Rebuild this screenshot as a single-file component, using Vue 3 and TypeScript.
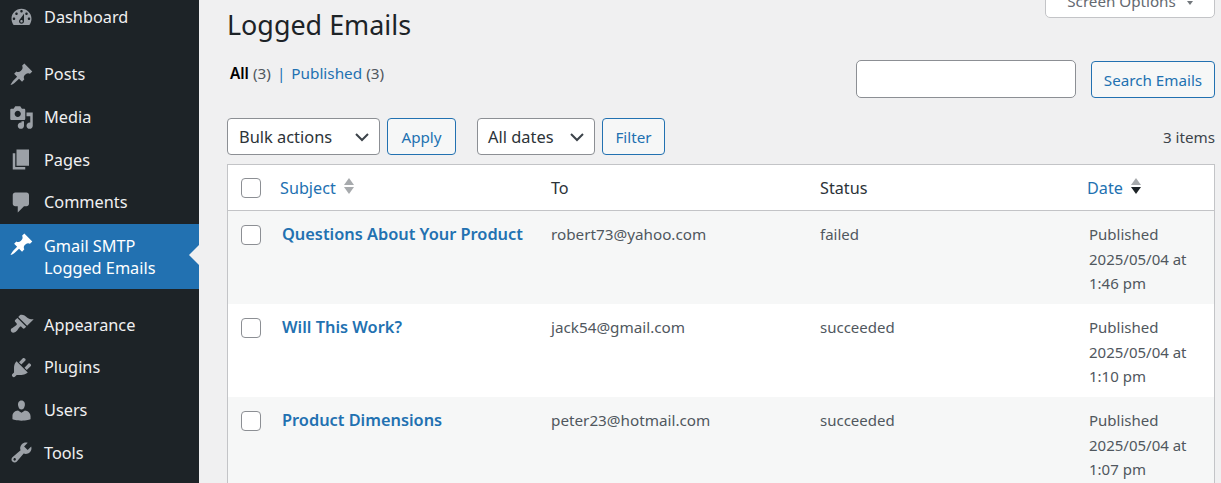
<script setup lang="ts">
interface Menu { label: string[]; path: string; active?: boolean; gapBefore?: boolean }
const menu: Menu[] = [
  { label: ['Dashboard'], path: 'M3.76 16h12.48c1.1-1.37 1.76-3.11 1.76-5 0-4.42-3.58-8-8-8s-8 3.58-8 8c0 1.89.66 3.63 1.76 5zM10 4c.55 0 1 .45 1 1s-.45 1-1 1-1-.45-1-1 .45-1 1-1zM6 6c.55 0 1 .45 1 1s-.45 1-1 1-1-.45-1-1 .45-1 1-1zm8 0c.55 0 1 .45 1 1s-.45 1-1 1-1-.45-1-1 .45-1 1-1zm-5.37 5.55L12 7v6c0 1.1-.9 2-2 2s-2-.9-2-2c0-.57.24-1.08.63-1.45zM4 10c.55 0 1 .45 1 1s-.45 1-1 1-1-.45-1-1 .45-1 1-1zm12 0c.55 0 1 .45 1 1s-.45 1-1 1-1-.45-1-1 .45-1 1-1zm-5 3c0-.55-.45-1-1-1s-1 .45-1 1 .45 1 1 1 1-.45 1-1z' },
  { label: ['Posts'], gapBefore: true, path: 'M10.44 3.02l1.82-1.82 6.36 6.35-1.83 1.82c-1.05-.68-2.48-.57-3.41.36l-.75.75c-.92.93-1.04 2.35-.35 3.41l-1.83 1.82-2.41-2.41-2.8 2.79c-.42.42-3.38 2.71-3.8 2.29s1.86-3.39 2.28-3.81l2.79-2.79L4.1 9.36l1.83-1.82c1.05.69 2.48.57 3.41-.36l.75-.75c.93-.92 1.05-2.35.35-3.41z' },
  { label: ['Media'], path: 'M13 11V4c0-.55-.45-1-1-1h-1.67L9 1H5L3.67 3H2c-.55 0-1 .45-1 1v7c0 .55.45 1 1 1h10c.55 0 1-.45 1-1zM7 4.5c1.38 0 2.5 1.12 2.5 2.5S8.38 9.5 7 9.5 4.5 8.38 4.5 7 5.62 4.5 7 4.5zM14 6h5v10.5c0 1.38-1.12 2.5-2.5 2.5S14 17.88 14 16.5s1.12-2.5 2.5-2.5c.17 0 .34.02.5.05V9h-3V6zm-4 8.05V13h2v3.5c0 1.38-1.12 2.5-2.5 2.5S7 17.88 7 16.5 8.12 14 9.5 14c.17 0 .34.02.5.05z' },
  { label: ['Pages'], path: 'M6 15V2h10v13H6zm-1 1h8v2H3V5h2v11z' },
  { label: ['Comments'], path: 'M5 2h9c1.1 0 2 .9 2 2v7c0 1.1-.9 2-2 2h-2l-5 5v-5H5c-1.1 0-2-.9-2-2V4c0-1.1.9-2 2-2z' },
  { label: ['Gmail SMTP', 'Logged Emails'], active: true, path: 'M10.44 3.02l1.82-1.82 6.36 6.35-1.83 1.82c-1.05-.68-2.48-.57-3.41.36l-.75.75c-.92.93-1.04 2.35-.35 3.41l-1.83 1.82-2.41-2.41-2.8 2.79c-.42.42-3.38 2.71-3.8 2.29s1.86-3.39 2.28-3.81l2.79-2.79L4.1 9.36l1.83-1.82c1.05.69 2.48.57 3.41-.36l.75-.75c.93-.92 1.05-2.35.35-3.41z' },
  { label: ['Appearance'], gapBefore: true, path: 'M14.48 11.06L7.41 3.99l1.5-1.5c.5-.56 2.3-.47 3.51.32 1.21.8 1.43 1.28 2.91 2.1 1.18.64 2.45 1.26 4.45.85zm-.71.71L6.7 4.7 4.93 6.47c-.39.39-.39 1.02 0 1.41l1.06 1.06c.39.39.39 1.03 0 1.42-.6.6-1.43 1.11-2.21 1.69-.35.26-.7.53-1.01.84C1.43 13.23.91 14.9 1.98 15.97c1.07 1.07 2.74.55 4.08-.79.31-.31.58-.66.84-1.01.58-.78 1.09-1.61 1.69-2.21.39-.39 1.03-.39 1.42 0l1.06 1.06c.39.39 1.02.39 1.41 0z' },
  { label: ['Plugins'], path: 'M13.11 4.36L9.87 7.6 8 5.73l3.24-3.24c.35-.34 1.05-.2 1.56.32.52.51.66 1.21.31 1.55zm-8 1.77l.91-1.12 9.01 9.01-1.19.84c-.71.71-2.63 1.16-3.82 1.16H6.14L4.9 17.26c-.59.59-1.54.59-2.12 0-.59-.58-.59-1.53 0-2.12l1.24-1.24v-3.88c0-1.13.4-3.19 1.09-3.89zm7.26 3.97l3.24-3.24c.34-.35 1.04-.21 1.55.31.52.51.66 1.21.31 1.55l-3.24 3.25z' },
  { label: ['Users'], path: 'M10 9.25c-2.27 0-2.73-3.44-2.73-3.44C7 4.02 7.82 2 9.97 2c2.16 0 2.98 2.02 2.71 3.81 0 0-.41 3.44-2.68 3.44zm0 2.57L12.72 10c2.39 0 4.52 2.33 4.52 4.53v2.49s-3.65 1.13-7.24 1.13c-3.65 0-7.24-1.13-7.24-1.13v-2.49c0-2.25 1.94-4.48 4.47-4.48z' },
  { label: ['Tools'], path: 'M16.68 9.77c-1.34 1.34-3.3 1.67-4.95.99l-5.41 6.52c-.99.99-2.59.99-3.58 0s-.99-2.59 0-3.57l6.52-5.42c-.68-1.65-.35-3.61.99-4.95 1.28-1.28 3.12-1.62 4.72-1.06l-2.89 2.89 2.82 2.82 2.86-2.87c.53 1.58.18 3.39-1.08 4.65zM3.81 16.21c.4.39 1.04.39 1.43 0 .4-.4.4-1.04 0-1.43-.39-.4-1.03-.4-1.43 0-.39.39-.39 1.03 0 1.43z' },
]
const rows = [
  { subject: 'Questions About Your Product', to: 'robert73@yahoo.com', status: 'failed', time: '1:46 pm' },
  { subject: 'Will This Work?', to: 'jack54@gmail.com', status: 'succeeded', time: '1:10 pm' },
  { subject: 'Product Dimensions', to: 'peter23@hotmail.com', status: 'succeeded', time: '1:07 pm' },
]
</script>

<template>
  <div class="page">
    <nav class="side">
      <a v-for="m in menu" :key="m.label[0]" class="item" :class="{ active: m.active, gap: m.gapBefore }">
        <svg class="ico" viewBox="0 0 20 20"><path :d="m.path" /></svg>
        <span class="lbl"><span v-for="l in m.label" :key="l" class="ln">{{ l }}</span></span>
      </a>
    </nav>
    <main class="main">
      <header class="head">
        <h1>Logged Emails</h1>
        <div class="screen">Screen Options <i class="caret"></i></div>
      </header>
      <div class="bar-top">
        <div class="subsub"><b>All</b> <span class="cnt">(3)</span><span class="sep">|</span><a>Published</a> <span class="cnt">(3)</span></div>
        <div class="search"><div class="input"></div><button class="btn search-btn">Search Emails</button></div>
      </div>
      <div class="nav">
        <div class="select bulk">Bulk actions<svg viewBox="0 0 16 16"><path d="M2 5l6 6 6-6" /></svg></div>
        <button class="btn apply">Apply</button>
        <div class="select dates">All dates<svg viewBox="0 0 16 16"><path d="M2 5l6 6 6-6" /></svg></div>
        <button class="btn filter">Filter</button>
        <span class="count">3 items</span>
      </div>
      <section class="table">
        <div class="row th">
          <span class="cb-cell"><span class="cb"></span></span>
          <span class="sub-h"><a>Subject</a><span class="sort"><i class="up"></i><i class="down"></i></span></span>
          <span>To</span>
          <span>Status</span>
          <span class="date-h"><a>Date</a><span class="sort"><i class="up"></i><i class="down dark"></i></span></span>
        </div>
        <div v-for="(r, i) in rows" :key="r.subject" class="row td" :class="{ alt: i % 2 === 0 }">
          <span class="cb-cell"><span class="cb"></span></span>
          <a class="subject">{{ r.subject }}</a>
          <span class="email">{{ r.to }}</span>
          <span>{{ r.status }}</span>
          <span class="date">Published<br />2025/05/04 at<br />{{ r.time }}</span>
        </div>
      </section>
    </main>
  </div>
</template>

<style>
html, body { margin: 0; overflow: hidden; }
</style>

<style scoped>
.page {
  display: flex; width: 1221px; height: 483px; overflow: hidden;
  background: #f0f0f1; font-family: "Noto Sans", "Open Sans", sans-serif;
  color: #3c434a; font-size: 15px;
}
.side {
  width: 199px; flex: none; background: #1d2327; color: #f0f0f1;
  display: flex; flex-direction: column;
}
.item {
  position: relative; display: flex; align-items: center; height: 42.7px; flex: none;
  padding-left: 9px; box-sizing: border-box;
}
.item:first-child { margin-top: -4px; }
.item.gap { margin-top: 14.3px; }
.item.active + .item.gap { margin-top: 14.6px; }
.item.active {
  height: 65px; background: #2271b1; color: #fff; align-items: flex-start; padding-top: 11.5px;
}
.item.active::after {
  content: ""; position: absolute; right: 0; top: 21px;
  border: 10px solid transparent; border-right-color: #f0f0f1; border-left: 0;
}
.ico { width: 25px; height: 25px; flex: none; fill: #9ca1a7; }
.active .ico { fill: #fff; margin-top: -3px; }
.lbl { margin-left: 10px; display: flex; flex-direction: column; font-size: 16.3px; line-height: 22px; }
.ln { white-space: nowrap; }
.main { flex: 1; min-width: 0; padding: 0 6px 0 28px; }
.head { display: flex; justify-content: space-between; align-items: flex-start; height: 60px; }
h1 {
  margin: 6px 0 0; font-size: 26.9px; line-height: 38px; font-weight: 400; color: #1d2327;
}
.screen {
  margin-top: -14px; height: 32px; width: 170px; box-sizing: border-box;
  background: #fff; border: 1px solid #c3c4c7; border-radius: 0 0 5px 5px;
  text-align: center; line-height: 28px; color: #646970; font-size: 15.2px;
}
.caret {
  display: inline-block; margin-left: 7px; vertical-align: middle;
  border: 3px solid transparent; border-top: 4px solid #72777c; border-bottom: 0;
}
.bar-top { display: flex; justify-content: space-between; align-items: flex-start; height: 58px; }
.subsub { font-size: 15.3px; line-height: 24px; margin-top: 1px; color: #50575e; margin-left: 3px; }
.subsub b { font-weight: 600; color: #000; }
.subsub a { color: #2271b1; }
.cnt { color: #50575e; }
.sep { margin: 0 6px; color: #2271b1; }
.search { display: flex; }
.input {
  width: 220px; height: 38px; box-sizing: border-box; background: #fff;
  border: 1px solid #8c8f94; border-radius: 5px;
}
.btn {
  box-sizing: border-box; height: 37px; padding: 0; background: #f6f7f7; color: #2271b1;
  border: 1px solid #2271b1; border-radius: 4px; font: inherit; font-size: 15.2px;
}
.search-btn { width: 124px; margin-left: 15px; margin-top: 1px; }
.nav { display: flex; align-items: center; height: 37px; margin-bottom: 9px; }
.select {
  position: relative; box-sizing: border-box; height: 37px; display: flex; align-items: center;
  background: #fff; border: 1px solid #8c8f94; border-radius: 4px;
  color: #2c3338; font-size: 16.4px; padding-left: 11px;
}
.select svg {
  position: absolute; right: 9px; top: 10px; width: 16px; height: 16px;
  fill: none; stroke: #3c434a; stroke-width: 2;
}
.bulk { width: 153px; }
.apply { width: 69px; margin-left: 7px; }
.dates { width: 118px; margin-left: 21px; padding-left: 10px; }
.filter { width: 63px; margin-left: 7px; }
.count { margin-left: auto; font-size: 15.2px; }
.table { border: 1px solid #c3c4c7; background: #fff; }
.row {
  display: grid; grid-template-columns: 42px 271px 269px 267px 1fr;
}
.th { height: 45px; align-items: center; border-bottom: 1px solid #c3c4c7; font-size: 16.2px; color: #2c3338; }
.th > span:nth-child(n+3) { padding-left: 10px; }
.th a { color: #2271b1; }
.sub-h { padding-left: 10px; display: flex; align-items: center; }
.th .date-h { display: flex; align-items: center; padding-left: 8px; }
.sort { display: inline-flex; flex-direction: column; gap: 2px; margin-left: 8px; margin-top: -3px; }
.sort i { display: block; border-left: 5px solid transparent; border-right: 5px solid transparent; }
.up { border-bottom: 7px solid #a7aaad; }
.down { border-top: 7px solid #a7aaad; }
.down.dark { border-top-color: #1d2327; }
.cb-cell { display: flex; justify-content: center; padding-left: 4px; }
.cb {
  display: block; width: 20px; height: 20px; box-sizing: border-box; background: #fff;
  border: 1px solid #8c8f94; border-radius: 4px;
}
.td { height: 93px; padding-top: 11px; box-sizing: border-box; font-size: 15px; line-height: 24.6px; color: #50575e; }
.td.alt { background: #f6f7f7; }
.td > span:nth-child(n+3) { padding-left: 10px; }
.td .cb-cell { padding-top: 3px; align-items: flex-start; }
.subject { padding-left: 12px; font-size: 16.35px; font-weight: 600; color: #2271b1; white-space: nowrap; }
.email { font-size: 15.25px; }
.td .date { padding-left: 12px !important; }
</style>
